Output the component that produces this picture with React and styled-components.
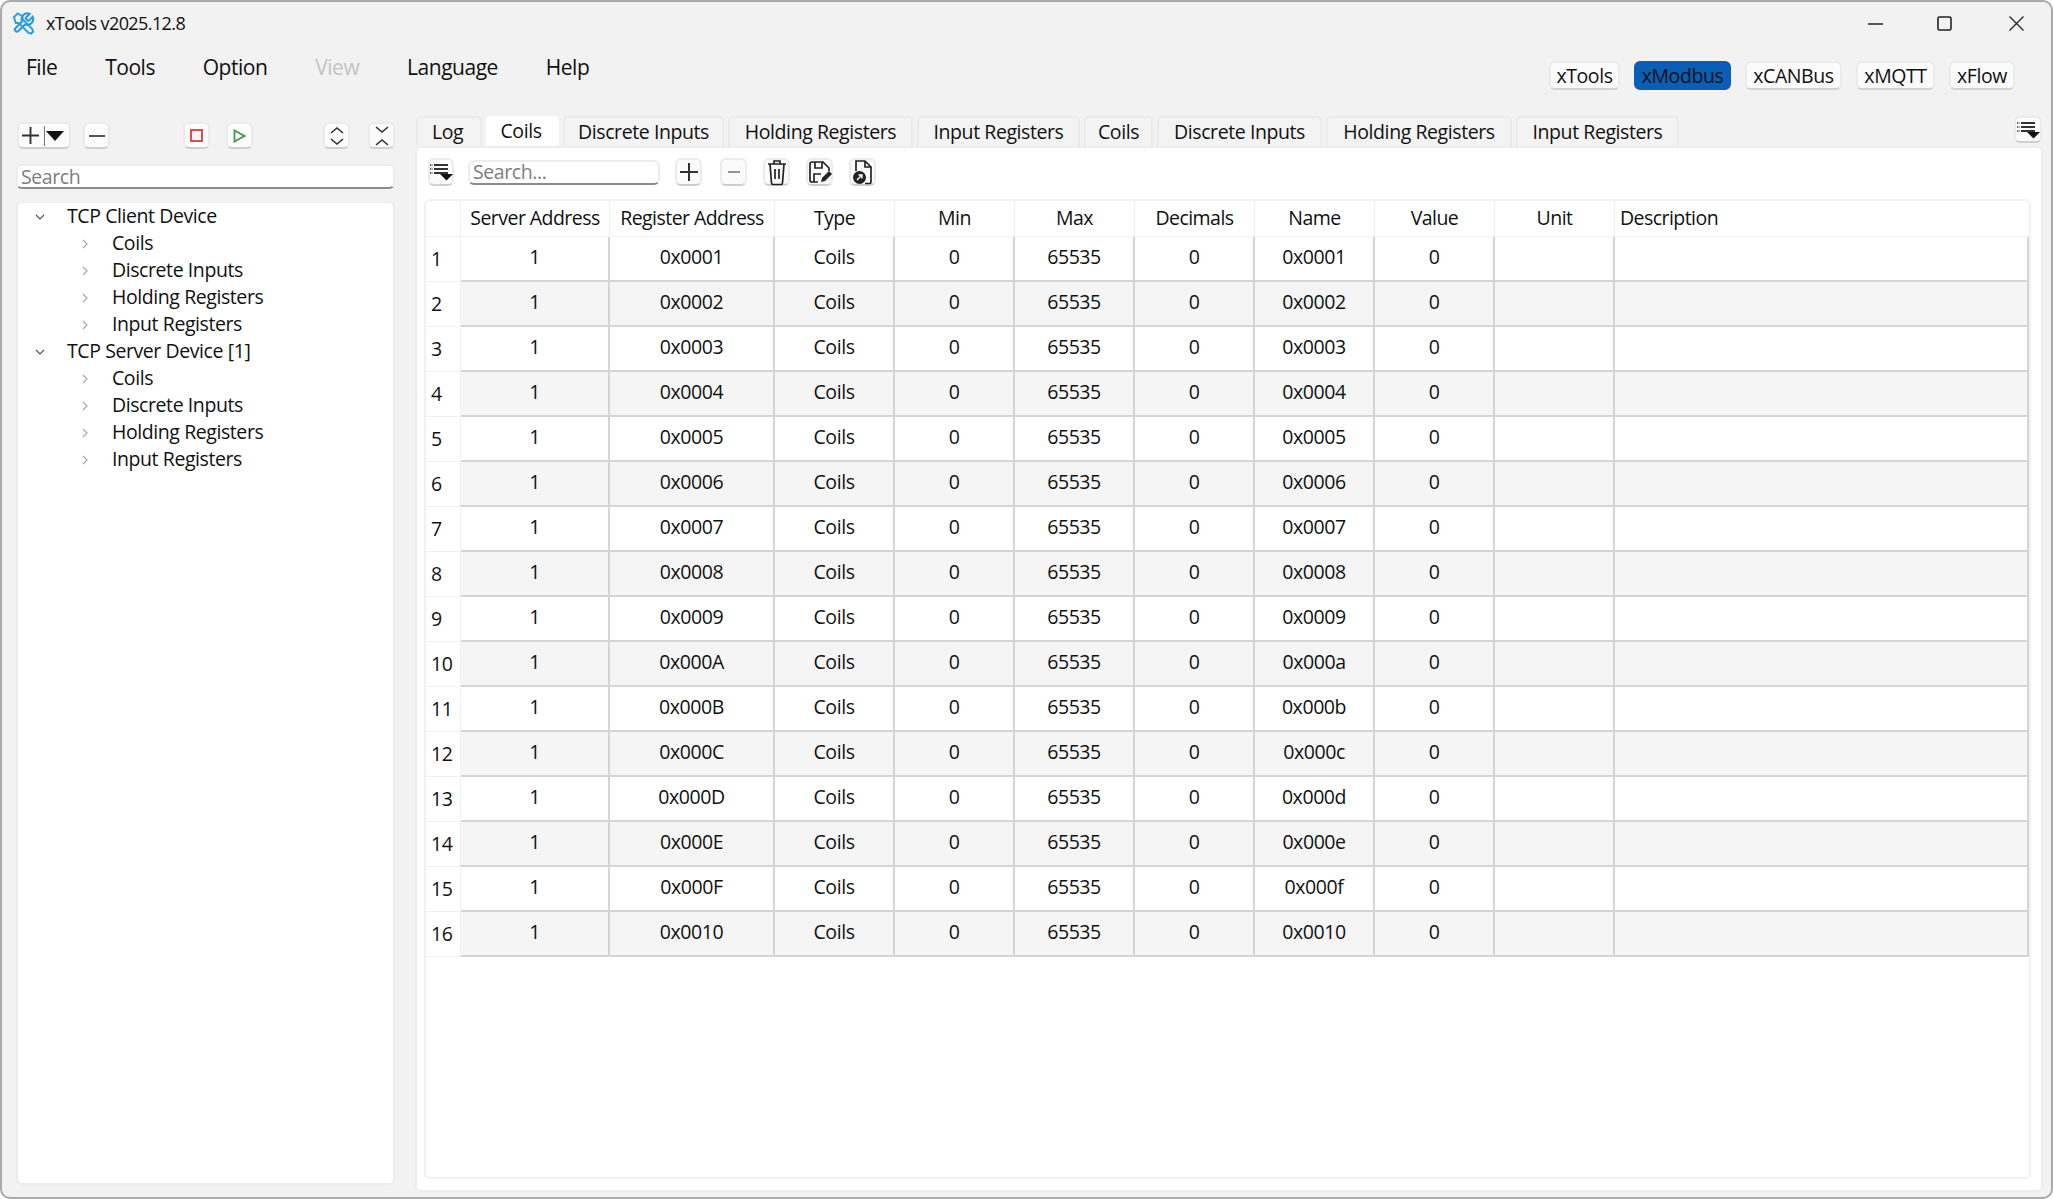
import React from 'react';
import styled, { createGlobalStyle } from 'styled-components';

const GlobalStyle = createGlobalStyle`
  html, body { margin: 0; padding: 0; height: 100%; background: #fff; overflow: hidden; }
  #root { height: 100%; }
  * { box-sizing: border-box; }
`;

const FONT = `"Open Sans", "Noto Sans", "Liberation Sans", sans-serif`;
const COLS = '35px 149px 165px repeat(7, 120px) 1fr';

const Window = styled.div`
  width: 2053px;
  height: 1199px;
  display: flex;
  flex-direction: column;
  border: 2px solid #a9a9a9;
  border-radius: 10px;
  background: #f2f2f2;
  color: #111;
  font-family: ${FONT};
  font-size: 19.5px;
  letter-spacing: -0.42px;
  overflow: hidden;
`;

const TitleBar = styled.div`
  height: 42px;
  flex: none;
  display: flex;
  align-items: center;
  padding-left: 10px;
  padding-right: 27px;
`;

const AppTitle = styled.span`
  margin-left: 11px;
  font-size: 18px;
  letter-spacing: -0.6px;
`;

const WinControls = styled.div`
  margin-left: auto;
  display: flex;
  align-items: center;
  gap: 54px;
`;

const CloseSlot = styled.span`
  display: flex;
  margin-left: 3px;
`;

const MenuRow = styled.div`
  height: 72px;
  flex: none;
  display: flex;
  align-items: flex-start;
  padding: 9px 36px 0 24px;
`;

const MenuList = styled.div`
  display: flex;
  gap: 47.8px;
  font-size: 21px;
  letter-spacing: -0.47px;
`;

const MenuItem = styled.span`
  color: ${(p) => (p.$disabled ? '#c4c4c4' : '#111')};
`;

const Switcher = styled.div`
  margin-left: auto;
  display: flex;
  gap: 14px;
  padding-top: 8px;
`;

const SwitchBtn = styled.div`
  width: ${(p) => p.$w}px;
  height: 29px;
  display: flex;
  align-items: center;
  justify-content: center;
  border-radius: 6px;
  border: 2px solid ${(p) => (p.$on ? '#0a5eb5' : '#ebebeb')};
  border-bottom-color: ${(p) => (p.$on ? '#0a5eb5' : '#d2d2d2')};
  background: ${(p) => (p.$on ? '#0a5eb5' : '#fbfbfb')};
`;

const Body = styled.div`
  flex: 1;
  min-height: 0;
  display: flex;
  padding: 0 8px 5px 14px;
`;

const Sidebar = styled.div`
  width: 379px;
  flex: none;
  display: flex;
  flex-direction: column;
  padding-top: 6px;
  padding-bottom: 7px;
`;

const SideTools = styled.div`
  display: flex;
  height: 26px;
  flex: none;
  padding-left: 1px;
`;

const ToolGroup = styled.div`
  display: flex;
  gap: ${(p) => p.$gap || 12}px;
  margin-left: ${(p) => p.$ml || 0}px;
`;

const ToolBtn = styled.div`
  width: ${(p) => p.$w || 27}px;
  height: ${(p) => p.$h || 27}px;
  margin-right: ${(p) => p.$mr || 0}px;
  flex: none;
  display: flex;
  align-items: center;
  justify-content: center;
  gap: 1px;
  background: #fbfbfb;
  border: 2px solid #ebebeb;
  border-bottom-color: #cfcfcf;
  border-radius: 6px;
  svg { flex: none; }
`;

const SplitBtn = styled(ToolBtn)`
  justify-content: flex-start;
  padding-left: 2px;
`;

const Divider = styled.span`
  width: 1px;
  height: 20px;
  margin-left: 3px;
  background: #777;
`;

const SearchField = styled.input`
  display: block;
  width: ${(p) => p.$w || '100%'};
  height: 25px;
  flex: none;
  margin-left: ${(p) => p.$ml || 0}px;
  margin-right: ${(p) => p.$mr || 0}px;
  padding: 0 2px 1px 3px;
  background: #fff;
  border: 2px solid #ededed;
  border-bottom: 2px solid #8c8c8c;
  border-radius: 6px;
  outline: none;
  font-family: ${FONT};
  font-size: 19.5px;
  letter-spacing: -0.42px;
  color: #111;
  &::placeholder { color: #7d7d7d; opacity: 1; }
`;

const SideSearchWrap = styled.div`
  margin: 16px 0 13px 0;
`;

const Tree = styled.div`
  flex: 1;
  min-height: 0;
  background: #fff;
  border: 2px solid #ececec;
  border-top-width: 1px;
  border-radius: 6px;
`;

const TreeRow = styled.div`
  height: 27px;
  display: flex;
  align-items: center;
  padding-left: ${(p) => (p.$depth ? 63 : 16)}px;
  padding-bottom: 3px;
  white-space: nowrap;
`;

const TreeArrow = styled.span`
  width: ${(p) => (p.$depth ? 31 : 33)}px;
  flex: none;
  display: flex;
  align-items: center;
  padding-top: 3px;
`;

const Main = styled.div`
  flex: 1;
  min-width: 0;
  margin-left: 20px;
  display: flex;
  flex-direction: column;
`;

const TabBar = styled.div`
  height: 30px;
  flex: none;
  display: flex;
  align-items: flex-end;
  gap: 4px;
  padding-left: 1px;
  padding-right: 1px;
`;

const Tab = styled.div`
  width: ${(p) => p.$w}px;
  height: 30px;
  display: flex;
  align-items: center;
  justify-content: center;
  padding-bottom: ${(p) => (p.$active ? 4 : 2)}px;
  padding-right: ${(p) => p.$pr || 0}px;
  background: ${(p) => (p.$active ? '#fff' : '#f3f3f3')};
  border: 2px solid ${(p) => (p.$active ? '#fff' : '#ebebeb')};
  border-bottom: none;
  border-radius: 5px 5px 0 0;
  white-space: nowrap;
`;

const CornerBtn = styled(ToolBtn)`
  margin-left: auto;
  margin-bottom: 3px;
  align-self: flex-end;
`;

const Panel = styled.div`
  flex: 1;
  min-height: 0;
  display: flex;
  flex-direction: column;
  padding: 10px 10px 11px 7px;
  background: #fff;
  border: 2px solid #ededed;
  border-radius: 6px;
`;

const PanelTools = styled.div`
  height: 28px;
  flex: none;
  display: flex;
  align-items: center;
  gap: 16px;
  margin-left: 4px;
  margin-bottom: 13px;
`;

const Table = styled.div`
  flex: 1;
  min-height: 0;
  border: 2px solid #f1f1f1;
  border-radius: 6px;
  overflow: hidden;
`;

const TableRow = styled.div`
  display: grid;
  grid-template-columns: ${COLS};
  height: ${(p) => (p.$head ? 36 : 45)}px;
`;

const HeadCell = styled.div`
  display: flex;
  align-items: center;
  justify-content: ${(p) => (p.$left ? 'flex-start' : 'center')};
  padding-left: ${(p) => (p.$left ? 5 : 0)}px;
  padding-bottom: 3px;
  letter-spacing: -0.55px;
  border-right: ${(p) => (p.$last ? 'none' : '1px solid #f0f0f0')};
  border-bottom: 1px solid #f0f0f0;
  white-space: nowrap;
`;

const RowNum = styled.div`
  display: flex;
  align-items: center;
  padding: 0 0 1px 5px;
  border-right: 1px solid #f0f0f0;
  border-bottom: 1px solid #f0f0f0;
`;

const Cell = styled.div`
  display: flex;
  align-items: center;
  justify-content: center;
  padding-bottom: 5px;
  background: ${(p) => (p.$alt ? '#f5f5f5' : '#fff')};
  border-right: 2px solid #d5d5d5;
  border-bottom: 2px solid #d5d5d5;
`;

function Plus({ size = 20, w = 2 }) {
  return (
    <svg width={size} height={size} viewBox="0 0 20 20" fill="none" stroke="#333" strokeWidth={w}>
      <path d="M10 1v18M1 10h18" />
    </svg>
  );
}

function Minus({ size = 16, w = 2, color = '#555' }) {
  return (
    <svg width={size} height={size} viewBox="0 0 16 16" fill="none" stroke={color} strokeWidth={w}>
      <path d="M0 8h16" />
    </svg>
  );
}

function ListMenu() {
  return (
    <svg width="24" height="18" viewBox="0 0 24 18" fill="none">
      <path d="M1 2h2.5M1 6h2.5M1 10h2.5" stroke="#333" strokeWidth="1.5" strokeDasharray="1.2 0.6" />
      <path d="M5 2h14M5 6h14M5 10h14" stroke="#333" strokeWidth="1.8" />
      <path d="M11 11h13l-6.5 6.5z" fill="#111" />
    </svg>
  );
}

function Logo() {
  const wrench = 'M14.7 6.3a1 1 0 0 0 0 1.4l1.6 1.6a1 1 0 0 0 1.4 0l3.77-3.77a6 6 0 0 1-7.94 7.94l-6.91 6.91a2.12 2.12 0 0 1-3-3l6.91-6.91a6 6 0 0 1 7.94-7.94l-3.76 3.76z';
  return (
    <svg width="23" height="24" viewBox="0 0 24 24" fill="none" stroke="#2a9be0" strokeWidth="2.2">
      <path d={wrench} />
      <path d="M2 6l4-4 5 3v3l10 10 1 3-2 2-3-1L7 12H4z" strokeWidth="2" />
    </svg>
  );
}

const TREE = ['Coils', 'Discrete Inputs', 'Holding Registers', 'Input Registers'];
const TABS = [
  { label: 'Log', w: 66, pr: 3 }, { label: 'Coils', w: 73, active: true, pr: 3 },
  { label: 'Discrete Inputs', w: 161 }, { label: 'Holding Registers', w: 185 }, { label: 'Input Registers', w: 163 },
  { label: 'Coils', w: 69 }, { label: 'Discrete Inputs', w: 165 }, { label: 'Holding Registers', w: 186 }, { label: 'Input Registers', w: 163 },
];
const HEADS = ['Server Address', 'Register Address', 'Type', 'Min', 'Max', 'Decimals', 'Name', 'Value', 'Unit'];
const APPS = [['xTools', 71], ['xModbus', 97, true], ['xCANBus', 97], ['xMQTT', 79], ['xFlow', 66]];

function TreeGroup({ name }) {
  return (
    <>
      <TreeRow>
        <TreeArrow>
          <svg width="12" height="8" viewBox="0 0 12 8" fill="none" stroke="#555" strokeWidth="1.2">
            <path d="M2 2l4 4 4-4" />
          </svg>
        </TreeArrow>
        {name}
      </TreeRow>
      {TREE.map((t) => (
        <TreeRow key={t} $depth={1}>
          <TreeArrow $depth={1}>
            <svg width="8" height="12" viewBox="0 0 8 12" fill="none" stroke="#a8a8a8" strokeWidth="1.2">
              <path d="M2 2l4 4-4 4" />
            </svg>
          </TreeArrow>
          {t}
        </TreeRow>
      ))}
    </>
  );
}

export default function App() {
  const rows = Array.from({ length: 16 }, (_, i) => i + 1);
  return (
    <>
      <GlobalStyle />
      <Window>
        <TitleBar>
          <Logo />
          <AppTitle>xTools v2025.12.8</AppTitle>
          <WinControls>
            <svg width="15" height="15" viewBox="0 0 15 15" fill="none" stroke="#222" strokeWidth="1.4">
              <path d="M0 8h15" />
            </svg>
            <svg width="15" height="15" viewBox="0 0 15 15" fill="none" stroke="#222" strokeWidth="1.6">
              <rect x="1" y="1" width="13" height="13" rx="1.5" />
            </svg>
            <CloseSlot>
              <svg width="15" height="15" viewBox="0 0 15 15" fill="none" stroke="#222" strokeWidth="1.3">
                <path d="M0.5 0.5l14 14M14.5 0.5l-14 14" />
              </svg>
            </CloseSlot>
          </WinControls>
        </TitleBar>

        <MenuRow>
          <MenuList>
            <MenuItem>File</MenuItem>
            <MenuItem>Tools</MenuItem>
            <MenuItem>Option</MenuItem>
            <MenuItem $disabled>View</MenuItem>
            <MenuItem>Language</MenuItem>
            <MenuItem>Help</MenuItem>
          </MenuList>
          <Switcher>
            {APPS.map(([name, w, on]) => (
              <SwitchBtn key={name} $w={w} $on={on}>{name}</SwitchBtn>
            ))}
          </Switcher>
        </MenuRow>

        <Body>
          <Sidebar>
            <SideTools>
              <ToolGroup>
                <SplitBtn $w={54}>
                  <Plus size={19} />
                  <Divider />
                  <svg width="18" height="10" viewBox="0 0 18 10"><path d="M0 0h18l-9 10z" fill="#111" /></svg>
                </SplitBtn>
                <ToolBtn><Minus /></ToolBtn>
              </ToolGroup>
              <ToolGroup $ml={73} $gap={16}>
                <ToolBtn>
                  <svg width="13" height="13" viewBox="0 0 13 13" fill="#f4f4f4" stroke="#e0393e" strokeWidth="1.8">
                    <rect x="1" y="1" width="11" height="11" />
                  </svg>
                </ToolBtn>
                <ToolBtn>
                  <svg width="13" height="14" viewBox="0 0 13 14" fill="none" stroke="#3f9a49" strokeWidth="1.8">
                    <path d="M1.5 1.5v11l10-5.5z" />
                  </svg>
                </ToolBtn>
              </ToolGroup>
              <ToolGroup $ml={70} $gap={18}>
                <ToolBtn>
                  <svg width="16" height="22" viewBox="0 0 16 22" fill="none" stroke="#333" strokeWidth="1.6">
                    <path d="M2 8l6-5 6 5M2 14l6 5 6-5" />
                  </svg>
                </ToolBtn>
                <ToolBtn>
                  <svg width="16" height="22" viewBox="0 0 16 22" fill="none" stroke="#333" strokeWidth="1.6">
                    <path d="M2 2l6 5 6-5M2 20l6-5 6 5" />
                  </svg>
                </ToolBtn>
              </ToolGroup>
            </SideTools>
            <SideSearchWrap>
              <SearchField placeholder="Search" />
            </SideSearchWrap>
            <Tree>
              <TreeGroup name="TCP Client Device" />
              <TreeGroup name="TCP Server Device [1]" />
            </Tree>
          </Sidebar>

          <Main>
            <TabBar>
              {TABS.map((t, i) => (
                <Tab key={i} $w={t.w} $active={t.active} $pr={t.pr}>{t.label}</Tab>
              ))}
              <CornerBtn $w={28}><ListMenu /></CornerBtn>
            </TabBar>
            <Panel>
              <PanelTools>
                <ToolBtn $w={26} $h={28}><ListMenu /></ToolBtn>
                <SearchField $w="192px" $ml={-2} $mr={-1} placeholder="Search..." />
                <ToolBtn $h={28} $mr={2}><Plus size={20} /></ToolBtn>
                <ToolBtn $h={28}><Minus size={12} w={1.5} color="#333" /></ToolBtn>
                <ToolBtn $h={28}>
                  <svg width="22" height="27" viewBox="0 0 22 27" fill="none" stroke="#222" strokeWidth="1.7">
                    <path d="M2 5h18M8 4.5V2h6v2.5M4 5l1.5 19a1.5 1.5 0 0 0 1.5 1.5h8a1.5 1.5 0 0 0 1.5-1.5L18 5" />
                    <path d="M9 10v10M13 10v10" />
                  </svg>
                </ToolBtn>
                <ToolBtn $h={28}>
                  <svg width="24" height="24" viewBox="0 0 24 24" fill="none" stroke="#222" strokeWidth="1.7">
                    <path d="M10 22H4a2 2 0 0 1-2-2V4a2 2 0 0 1 2-2h11l6 6v3" />
                    <path d="M7 2v6h7V2M6 22v-8h7" />
                    <path d="M13 22l1-4 7-7 3 3-7 7z" fill="#222" stroke="none" />
                  </svg>
                </ToolBtn>
                <ToolBtn $h={28}>
                  <svg width="22" height="26" viewBox="0 0 22 26" fill="none" stroke="#222" strokeWidth="1.7">
                    <path d="M4 12V2h9l6 6v15a1.5 1.5 0 0 1-1.5 1.5H13" />
                    <path d="M13 2v6h6" />
                    <circle cx="7.5" cy="18.5" r="6.5" fill="#222" stroke="none" />
                    <path d="M5 21l5-5M6.5 16H10v3.5" stroke="#fff" strokeWidth="1.4" />
                  </svg>
                </ToolBtn>
              </PanelTools>
              <Table>
                <TableRow $head>
                  <HeadCell />
                  {HEADS.map((h) => <HeadCell key={h}>{h}</HeadCell>)}
                  <HeadCell $left $last>Description</HeadCell>
                </TableRow>
                {rows.map((n) => {
                  const hex = n.toString(16).padStart(4, '0');
                  const alt = n % 2 === 0;
                  return (
                    <TableRow key={n}>
                      <RowNum>{n}</RowNum>
                      <Cell $alt={alt}>1</Cell>
                      <Cell $alt={alt}>0x{hex.toUpperCase()}</Cell>
                      <Cell $alt={alt}>Coils</Cell>
                      <Cell $alt={alt}>0</Cell>
                      <Cell $alt={alt}>65535</Cell>
                      <Cell $alt={alt}>0</Cell>
                      <Cell $alt={alt}>0x{hex}</Cell>
                      <Cell $alt={alt}>0</Cell>
                      <Cell $alt={alt} />
                      <Cell $alt={alt} />
                    </TableRow>
                  );
                })}
              </Table>
            </Panel>
          </Main>
        </Body>
      </Window>
    </>
  );
}
